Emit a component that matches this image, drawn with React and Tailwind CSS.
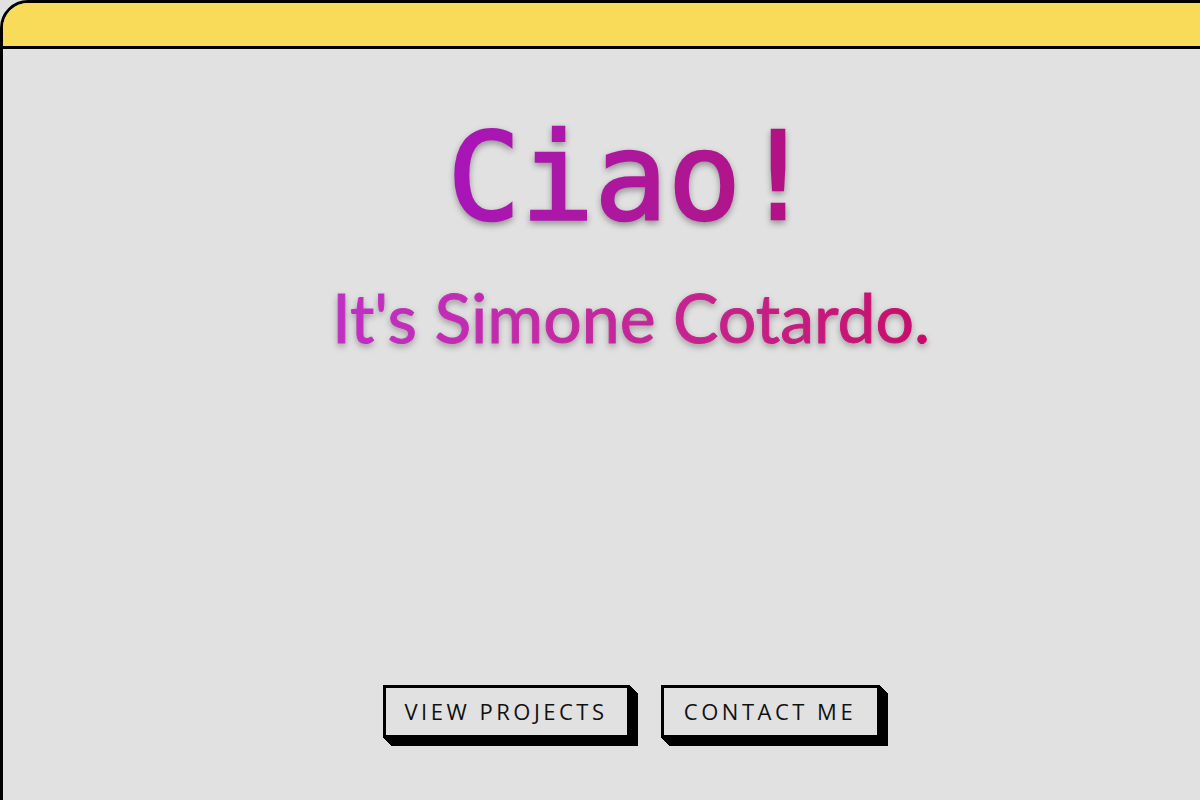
export default function App() {
  const btnShadow =
    "shadow-[1px_1px_0_#000,2px_2px_0_#000,3px_3px_0_#000,4px_4px_0_#000,5px_5px_0_#000,6px_6px_0_#000,7px_7px_0_#000,8px_8px_0_#000]";
  return (
    <div className="w-[1200px] h-[800px] overflow-hidden bg-[#e1e1e1]">
      <div className="w-[1262px] h-[830px] border-[3px] border-black rounded-tl-[28px] overflow-hidden flex flex-col bg-[#e1e1e1]">
        <div className="h-[46px] shrink-0 bg-[#f8db58] border-b-[3px] border-black" />
        <div className="flex-1 flex flex-col items-center">
          <h1
            className="mt-[58px] text-[122px] leading-[140px] font-normal [-webkit-text-stroke:2.5px_transparent] bg-gradient-to-r from-[#a814b9] to-[#b30f7e] bg-clip-text text-transparent drop-shadow-[0_3px_3px_rgba(0,0,0,0.35)]"
            style={{ fontFamily: '"DejaVu Sans Mono", monospace' }}
          >
            Ciao!
          </h1>
          <h2
            className="mt-[29px] text-[68px] leading-[82px] font-normal [-webkit-text-stroke:1px_transparent] bg-gradient-to-r from-[#c12ec6] to-[#c8086a] bg-clip-text text-transparent drop-shadow-[0_3px_3px_rgba(0,0,0,0.3)]"
            style={{ fontFamily: 'Lato, sans-serif' }}
          >
            It's Simone Cotardo.
          </h2>
          <div
            className="mt-[327px] flex gap-[31px]"
            style={{ fontFamily: '"Open Sans", sans-serif' }}
          >
            <button
              className={`w-[247px] h-[53px] border-[3px] border-black bg-[#e1e1e1] text-[22px] tracking-[3.5px] text-[#111] ${btnShadow}`}
            >
              VIEW PROJECTS
            </button>
            <button
              className={`w-[219px] h-[53px] border-[3px] border-black bg-[#e1e1e1] text-[22px] tracking-[3.5px] text-[#111] ${btnShadow}`}
            >
              CONTACT ME
            </button>
          </div>
        </div>
      </div>
    </div>
  );
}
